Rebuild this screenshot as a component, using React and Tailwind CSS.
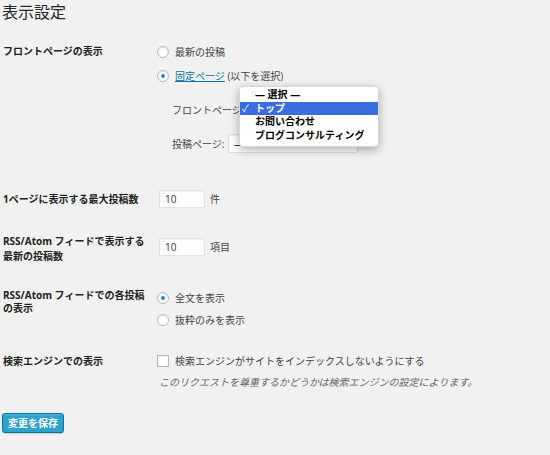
import React from "react";

const font = { fontFamily: '"Open Sans","Noto Sans CJK JP",sans-serif' };

function Radio({ checked }) {
  return (
    <span className="relative inline-block w-[12px] h-[12px] rounded-full bg-white border border-[#b4b9be] shadow-[inset_0_1px_2px_rgba(0,0,0,0.1)] shrink-0">
      {checked && (
        <span className="absolute left-[3px] top-[3px] w-[4px] h-[4px] rounded-full bg-[#1e8cbe]" />
      )}
    </span>
  );
}

function Select({ w, text }) {
  return (
    <div
      className={`h-[19px] bg-white border border-[#ddd] rounded-[2px] shadow-[inset_0_1px_2px_rgba(0,0,0,0.07)] flex items-center px-[5px] text-[#333] shrink-0 ${w}`}
    >
      <span>{text}</span>
    </div>
  );
}

function NumInput() {
  return (
    <div className="w-[46px] h-[18px] bg-white border border-[#e2e2e2] shadow-[inset_0_1px_2px_rgba(0,0,0,0.07)] flex items-center pl-[5px] text-[10px] text-[#333]">
      10
    </div>
  );
}

export default function App() {
  return (
    <div
      className="w-[550px] h-[455px] bg-[#f1f1f1] text-[10px] leading-[14px] text-[#444] relative overflow-hidden"
      style={font}
    >
      <h1 className="pl-[2px] text-[16px] leading-[24px] text-[#23282d]">表示設定</h1>

      {/* Row 1 */}
      <div className="flex mt-[20px]">
        <div className="w-[157px] pl-[3px] font-bold text-[#222]">フロントページの表示</div>
        <div className="flex flex-col">
          <div className="flex items-center h-[14px] mt-[1px]">
            <Radio />
            <span className="ml-[6px]">最新の投稿</span>
          </div>
          <div className="flex items-center h-[14px] mt-[10px]">
            <Radio checked />
            <span className="ml-[6px]">
              <span className="text-[#0074a2] underline">固定ページ</span> (以下を選択)
            </span>
          </div>
          <div className="flex items-center h-[19px] mt-[17px] ml-[15px]">
            <span className="w-[68px] whitespace-nowrap">フロントページ:</span>
            <Select w="w-[134px]" text="" />
          </div>
          <div className="flex items-center h-[19px] mt-[15px] ml-[15px]">
            <span className="w-[56px] whitespace-nowrap">投稿ページ:</span>
            <Select w="w-[130px]" text="—" />
          </div>
        </div>
      </div>

      {/* Row 2 */}
      <div className="flex items-center mt-[37px] h-[18px]">
        <div className="w-[159px] pl-[3px] font-bold text-[#222]">1ページに表示する最大投稿数</div>
        <NumInput />
        <span className="ml-[5px]">件</span>
      </div>

      {/* Row 3 */}
      <div className="flex items-start mt-[26px]">
        <div className="w-[159px] pl-[3px] font-bold text-[#222] leading-[15px]">
          RSS/Atom フィードで表示する
          <br />
          最新の投稿数
        </div>
        <div className="flex items-center mt-[4px]">
          <NumInput />
          <span className="ml-[5px]">項目</span>
        </div>
      </div>

      {/* Row 4 */}
      <div className="flex items-start mt-[25px]">
        <div className="w-[157px] pl-[3px] font-bold text-[#222] leading-[13px]">
          RSS/Atom フィードでの各投稿
          <br />
          の表示
        </div>
        <div className="flex flex-col mt-[2px]">
          <div className="flex items-center h-[14px]">
            <Radio checked />
            <span className="ml-[6px]">全文を表示</span>
          </div>
          <div className="flex items-center h-[14px] mt-[8px]">
            <Radio />
            <span className="ml-[6px]">抜粋のみを表示</span>
          </div>
        </div>
      </div>

      {/* Row 5 */}
      <div className="flex items-start mt-[26px]">
        <div className="w-[157px] pl-[3px] font-bold text-[#222] mt-[1px]">検索エンジンでの表示</div>
        <div className="flex flex-col">
          <div className="flex items-center h-[14px] mt-[1px]">
            <span className="w-[12px] h-[12px] bg-white border border-[#b4b9be] shadow-[inset_0_1px_2px_rgba(0,0,0,0.1)]" />
            <span className="ml-[6px]">検索エンジンがサイトをインデックスしないようにする</span>
          </div>
          <div className="mt-[7px] ml-[2px] italic text-[#666]">
            このリクエストを尊重するかどうかは検索エンジンの設定によります。
          </div>
        </div>
      </div>

      <div className="mt-[24px] pl-[2px]">
        <button className="w-[62px] h-[20px] bg-[#2ea2cc] border border-[#0074a2] rounded-[3px] text-white font-bold text-[10px] leading-[18px] shadow-[inset_0_1px_0_rgba(120,200,230,0.5),0_1px_0_rgba(0,0,0,0.15)]">
          変更を保存
        </button>
      </div>

      {/* Dropdown menu overlay */}
      <div className="absolute z-10 left-[239px] top-[86px] w-[140px] h-[61px] bg-white rounded-[4px] shadow-[0_3px_10px_rgba(0,0,0,0.3)] border border-[#d8d8d8] pt-[1px] text-black font-bold text-[10px] leading-[13.5px]">
        <div className="pl-[15px]">— 選択 —</div>
        <div className="flex bg-[#3a6ee0] text-white">
          <span className="w-[15px] pl-[2px] font-normal">✓</span>
          <span>トップ</span>
        </div>
        <div className="pl-[15px]">お問い合わせ</div>
        <div className="pl-[15px]">ブログコンサルティング</div>
      </div>
    </div>
  );
}
